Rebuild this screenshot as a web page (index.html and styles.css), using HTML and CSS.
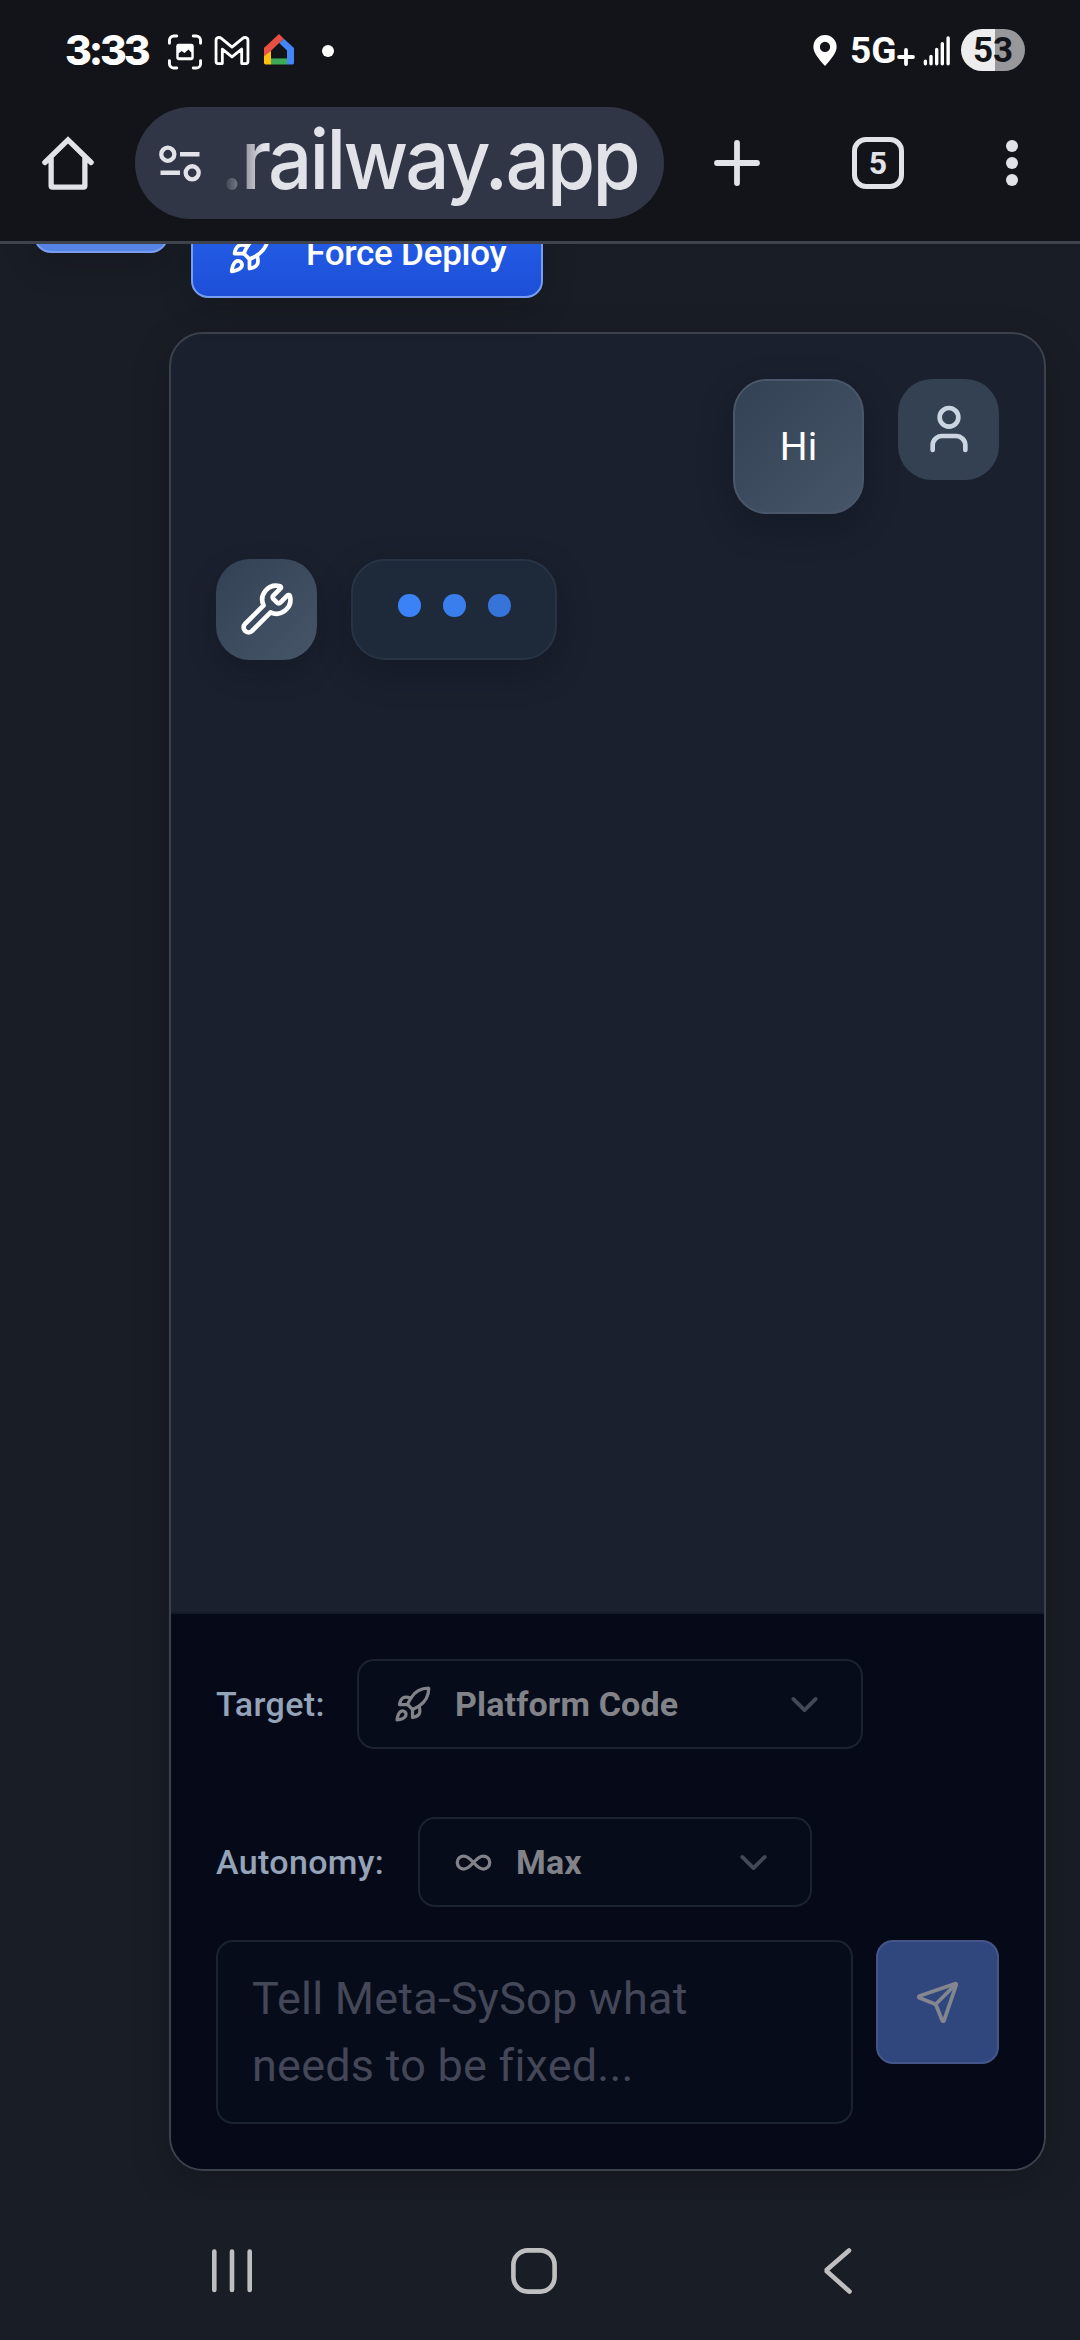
FILE: index.html
```html
<!DOCTYPE html>
<html lang="en">
<head>
<meta charset="utf-8">
<title>Meta-SySop</title>
<link rel="stylesheet" href="styles.css">
</head>
<body>
<svg class="defs" width="0" height="0" aria-hidden="true">
  <symbol id="rocket" viewBox="0 0 24 24"><path d="M4.5 16.5c-1.5 1.26-2 5-2 5s3.74-.5 5-2c.71-.84.7-2.13-.09-2.91a2.18 2.18 0 0 0-2.91-.09z"/><path d="m12 15-3-3a22 22 0 0 1 2-3.95A12.88 12.88 0 0 1 22 2c0 2.72-.78 7.5-6 11a22.35 22.35 0 0 1-4 2z"/><path d="M9 12H4s.55-3.03 2-4c1.62-1.08 5 0 5 0"/><path d="M12 15v5s3.03-.55 4-2c1.08-1.62 0-5 0-5"/></symbol>
  <symbol id="chevron" viewBox="0 0 24 24"><path d="m6 9 6 6 6-6"/></symbol>
</svg>

<header class="chrome">
  <div class="status">
    <span class="clock">3:33</span>
    <svg class="st-shot" width="36" height="36" viewBox="0 0 36 37"><path d="M2 9.500V6.500a4.500 4.500 0 0 1 4.500-4.500H9.500M26.500 2h3a4.500 4.500 0 0 1 4.500 4.500v3M34 27.500v3a4.500 4.500 0 0 1-4.500 4.500h-3M9.500 35h-3a4.500 4.500 0 0 1-4.500-4.500v-3" fill="none" stroke="#fff" stroke-width="3" stroke-linecap="round"/><rect x="9" y="10" width="18" height="17" rx="2.500" fill="#fff"/><path d="M11.500 24v-4l3-2.500 3 2 4-3.500 3 3v5z" fill="#131419"/></svg>
    <svg class="st-mail" width="36" height="29" viewBox="0 0 36 30"><path d="M3.500 28.500H8v-15l10 8 10-8v15h4.500a2 2 0 0 0 2-2V4.500C34.500 1.500 31 .8 29 2.500L18 11.500 7 2.500C5 .8 1.500 1.500 1.500 4.500v22a2 2 0 0 0 2 2z" fill="none" stroke="#fff" stroke-width="2.900" stroke-linejoin="round"/></svg>
    <svg class="st-home" width="30" height="31" viewBox="0 0 30 32" preserveAspectRatio="none"><path d="M0 14.500 15 0l4.800 4.800L0 24.500z" fill="#ea4f42"/><path d="M15.200 9.500 19.800 4.800 30 14.500V30q0 1.500-1.500 1.500H23V17z" fill="#4486f5"/><path d="M0 20.500 7 17v14.500H1.500Q0 31.500 0 30z" fill="#fbc010"/><path d="M0 14.500 7 9v8.500L0 23z" fill="#ea4f42"/><path d="M7 25h16v6.500H7z" fill="#3daa58"/><path d="M7 17.500 15 9.500l8 8V25H7z" fill="#131419"/></svg>
    <i class="st-dot"></i>
    <span class="grow"></span>
    <svg class="st-pin" width="24" height="31" viewBox="0 0 24 32"><path fill="#fff" fill-rule="evenodd" d="M12 0a12 12 0 0 1 12 12c0 6-5 12-12 20C5 24 0 18 0 12A12 12 0 0 1 12 0zm0 7a5.300 5.300 0 1 0 0 10.600A5.300 5.300 0 0 0 12 7z"/></svg>
    <span class="net">5G<svg width="18" height="18" viewBox="0 0 18 18"><path d="M9 2v14M2 9h14" stroke="#fff" stroke-width="3.800" stroke-linecap="round"/></svg></span>
    <svg class="st-signal" width="28" height="30" viewBox="0 0 28 31"><path d="M2 26v2.800M7.800 21v7.800M13.700 14v14.800M19.500 8v20.800M25.500 2v26.800" stroke="#fff" stroke-width="3.500" stroke-linecap="round"/></svg>
    <span class="battery">53</span>
  </div>
  <div class="toolbar">
    <svg class="tb-home" width="54" height="54" viewBox="0 0 54 56"><path d="M3 27.500 27 4l24 23.500M9.500 23v28.500q0 1.500 1.500 1.500h32q1.500 0 1.500-1.500V23" fill="none" stroke="#e2e2e9" stroke-width="5.500" stroke-linecap="round"/></svg>
    <div class="omnibox">
      <svg width="44" height="39" viewBox="0 0 44 40"><g fill="none" stroke="#e2e2e9" stroke-width="4.400"><circle cx="9.500" cy="10.500" r="6.700"/><circle cx="34.500" cy="29.500" r="6.700"/><path d="M22 10.500h20M2 29.500h20"/></g></svg>
      <span class="url">.railway.app</span>
    </div>
    <svg class="tb-plus" width="48" height="48" viewBox="0 0 48 48"><path d="M24 4v40M4 24h40" stroke="#e2e2e9" stroke-width="5.800" stroke-linecap="round"/></svg>
    <span class="tabs">5</span>
    <svg class="tb-more" width="12" height="48" viewBox="0 0 12 48"><g fill="#e2e2e9"><circle cx="6" cy="7" r="6"/><circle cx="6" cy="24" r="6"/><circle cx="6" cy="41" r="6"/></g></svg>
  </div>
</header>

<main class="page">
  <div class="actions">
    <span class="btn btn-light"></span>
    <button class="btn btn-deploy"><svg class="ico" width="45" height="45"><use href="#rocket"/></svg><span>Force Deploy</span></button>
  </div>
  <section class="card">
    <div class="messages">
      <div class="msg user">
        <div class="bubble">Hi</div>
        <div class="avatar"><svg class="ico" width="56" height="56" viewBox="0 0 24 24"><path d="M19 21v-2a4 4 0 0 0-4-4H9a4 4 0 0 0-4 4v2"/><circle cx="12" cy="7" r="4"/></svg></div>
      </div>
      <div class="msg">
        <div class="avatar bot"><svg class="ico" width="56" height="56" viewBox="0 0 24 24"><path d="M14.700 6.300a1 1 0 0 0 0 1.400l1.600 1.600a1 1 0 0 0 1.400 0l3.106-3.105c.32-.322.863-.22.983.218a6 6 0 0 1-8.259 7.057l-7.910 7.910a1 1 0 0 1-2.999-3l7.910-7.910a6 6 0 0 1 7.057-8.259c.438.120.540.662.219.984z"/></svg></div>
        <div class="typing"><i></i><i></i><i></i></div>
      </div>
    </div>
    <form class="composer">
      <div class="field"><label class="l-target">Target:</label>
        <div class="select s-target"><svg class="ico" width="39" height="39"><use href="#rocket"/></svg><span>Platform Code</span><svg class="ico chev" width="45" height="45"><use href="#chevron"/></svg></div>
      </div>
      <div class="field"><label class="l-auto">Autonomy:</label>
        <div class="select s-auto"><svg class="ico" width="39" height="39" viewBox="0 0 24 24"><path d="M6 16c5 0 7-8 12-8a4 4 0 0 1 0 8c-5 0-7-8-12-8a4 4 0 1 0 0 8"/></svg><span>Max</span><svg class="ico chev" width="45" height="45"><use href="#chevron"/></svg></div>
      </div>
      <div class="entry">
        <div class="input">Tell Meta-SySop what<br>needs to be fixed...</div>
        <button type="button" class="send"><svg class="ico" width="45" height="45" viewBox="0 0 24 24"><path d="M14.536 21.686a.5.5 0 0 0 .937-.024l6.500-19a.496.496 0 0 0-.635-.635l-19 6.500a.5.5 0 0 0-.024.937l7.930 3.180a2 2 0 0 1 1.112 1.110z"/><path d="m21.854 2.147-10.940 10.939"/></svg></button>
      </div>
    </form>
  </section>
</main>

<nav class="sysnav">
  <svg width="42" height="46" viewBox="0 0 42 46"><path d="M3.300 3.500v38.500M21 3.500v38.500M38.700 3.500v38.500" stroke="#bfbfc1" stroke-width="4.600" stroke-linecap="round"/></svg>
  <svg width="46" height="46" viewBox="0 0 46 46"><rect x="2.400" y="2.400" width="41.200" height="41.200" rx="14.500" fill="none" stroke="#bfbfc1" stroke-width="4.600"/></svg>
  <svg width="30" height="46" viewBox="0 0 30 46"><path d="M26 2.500 3 22.500 26.500 43.500" fill="none" stroke="#bfbfc1" stroke-width="4.600" stroke-linecap="round" stroke-linejoin="bevel"/></svg>
</nav>
</body>
</html>
```
FILE: styles.css
```css
* { box-sizing: border-box; }
body {
  margin: 0;
  width: 1080px;
  height: 2340px;
  display: flex;
  flex-direction: column;
  overflow: hidden;
  background: #191d25;
  font-family: Roboto, "Noto Sans", sans-serif;
}
svg { display: block; flex: none; }
.defs { height: 0; width: 0; overflow: hidden; position: absolute; }
.ico { fill: none; stroke: currentColor; stroke-width: 2; stroke-linecap: round; stroke-linejoin: round; }
button { font: inherit; margin: 0; }
.grow { flex: 1; }

/* Browser chrome */
.chrome { flex: none; height: 244px; background: #131419; border-bottom: 3px solid #3f434b; }
.status { height: 100px; padding: 0 55px 0 65px; display: flex; align-items: center; color: #fff; }
.clock { width: 102px; font: 800 41px/44px Inter, sans-serif; letter-spacing: -3.200px; white-space: nowrap; }
.st-shot { margin-top: 3px; }
.st-mail { margin: 1px 0 0 11px; }
.st-home { margin: -1px 0 0 14px; }
.st-dot { width: 12px; height: 12px; border-radius: 50%; background: #fff; margin: 2px 0 0 28px; }
.st-pin { margin: 1px 13px 0 0; }
.net { display: flex; align-items: center; width: 73px; font-weight: 700; font-size: 37px; }
.net svg { margin: 13px 0 0 1px; }
.st-signal { margin: 1px 10px 0 0; }
.battery {
  width: 64px; height: 42px; border-radius: 21px; text-align: center;
  background: linear-gradient(90deg, #ededed 53%, #98989a 53%);
  color: #131419; font: 700 35px/43px Roboto, sans-serif;
}
.toolbar { height: 126px; padding: 0 62px 0 41px; display: flex; align-items: center; }
.omnibox {
  width: 529px; height: 112px; margin-left: 40px; padding-left: 23px; border-radius: 56px;
  background: #313646; display: flex; align-items: center;
}
.url {
  flex: none; width: 450px; margin: -8px -50px 0 18px;
  font: 550 83px/112px Inter, sans-serif; letter-spacing: -2.900px; white-space: nowrap;
  transform: scaleX(.94); transform-origin: left center;
  background: linear-gradient(90deg, #313646 2px, #e2e2e9 46px); -webkit-background-clip: text; background-clip: text; -webkit-text-fill-color: transparent;
}
.tb-plus { margin-left: 49px; }
.tabs {
  width: 52px; height: 52px; margin-left: 91px; border: 5.500px solid #e2e2e9; border-radius: 14px;
  color: #e2e2e9; font: 700 32px/42px Roboto, sans-serif; text-align: center;
}
.tb-more { margin-left: 102px; }

/* App page */
.page { flex: none; height: 1956px; overflow: hidden; padding: 0 34px; }
.actions { display: flex; gap: 23px; align-items: flex-start; height: 88px; }
.btn { border: 2px solid #7a9df0; border-radius: 17px; box-shadow: 0 12px 34px rgba(0,0,0,.16); }
.btn-light { width: 134px; height: 90px; margin-top: -81px; background: #5684e4; }
.btn-deploy {
  width: 352px; height: 90px; margin-top: -36px; padding: 0 0 0 34px;
  display: flex; align-items: center; color: #fff; background: linear-gradient(#2563eb, #1d4ed8);
}
.btn-deploy span { margin-left: 34px; font-weight: 500; font-size: 35px; letter-spacing: -0.250px; white-space: nowrap; }
.card {
  width: 877px; height: 1839px; margin-left: 135px; display: flex; flex-direction: column; overflow: hidden;
  border: 2px solid #3c424c; border-radius: 34px; background: #1a202d; box-shadow: 0 12px 40px rgba(0,0,0,.18);
}
.messages { flex: 1; padding: 45px; display: flex; flex-direction: column; gap: 45px; }
.msg { display: flex; gap: 34px; align-items: flex-start; }
.user { justify-content: flex-end; }
.bubble, .avatar, .typing { border-radius: 34px; display: flex; align-items: center; }
.bubble {
  width: 131px; height: 135px; justify-content: center; color: #fff; font-size: 39px; font-weight: 400;
  border: 2px solid #4a576a; background: linear-gradient(135deg, #334155, #475569);
  box-shadow: 0 12px 34px rgba(10,12,28,.3);
}
.avatar { width: 101px; height: 101px; padding-bottom: 1px; justify-content: center; background: #334153; color: #cbd5e1; }
.bot { color: #fff; background: linear-gradient(135deg, #334155, #475569); box-shadow: 0 12px 28px rgba(10,12,28,.25); }
.typing {
  width: 206px; height: 101px; padding: 0 0 8px 45px; gap: 22.500px; border: 2px solid #283445; background: #1e293a;
  box-shadow: 0 12px 34px rgba(10,12,28,.3);
}
.typing i { width: 22.500px; height: 22.500px; border-radius: 50%; background: #3b82f6; }
.typing i:nth-child(2) { background: #3a7eee; }
.typing i:nth-child(3) { background: #3674da; }

/* Composer */
.composer { flex: none; height: 557px; padding: 45px; background: #060918; border-top: 2px solid #131b29; }
.field { display: flex; align-items: center; height: 90px; margin-bottom: 68px; color: #94a3b8; }
.field + .field { margin-bottom: 33px; }
label { font-weight: 500; font-size: 34px; letter-spacing: 0.350px; white-space: nowrap; }
.l-target { width: 141px; }
.l-auto { width: 202px; }
.select {
  height: 90px; display: flex; align-items: center; padding: 0 34px; border: 2px solid #1b2232; border-radius: 17px;
  background: #060c1a; color: #828389; font-weight: 700; font-size: 34px; letter-spacing: 0.150px; white-space: nowrap;
}
.select span { margin-left: 23px; }
.s-target { width: 506px; }
.s-auto { width: 394px; }
.chev { margin-left: auto; color: #454855; }
.entry { display: flex; gap: 23px; align-items: flex-start; }
.input {
  width: 637px; height: 184px; padding: 23px 34px; border: 2px solid #1b2232; border-radius: 17px;
  background: #060c1a; color: #434757; font-size: 45px; letter-spacing: 0.230px; line-height: 67px; white-space: nowrap;
}
.send {
  width: 123px; height: 124px; padding: 0; display: flex; align-items: center; justify-content: center;
  border: 2px solid #44558a; border-radius: 17px; background: #30477e; color: #84868f;
}

/* System navigation */
.sysnav { flex: 1; display: flex; align-items: center; padding: 2px 0 0 211px; }
.sysnav svg + svg { margin-left: 258px; }
.sysnav svg:last-child { margin-left: 266px; }
```
